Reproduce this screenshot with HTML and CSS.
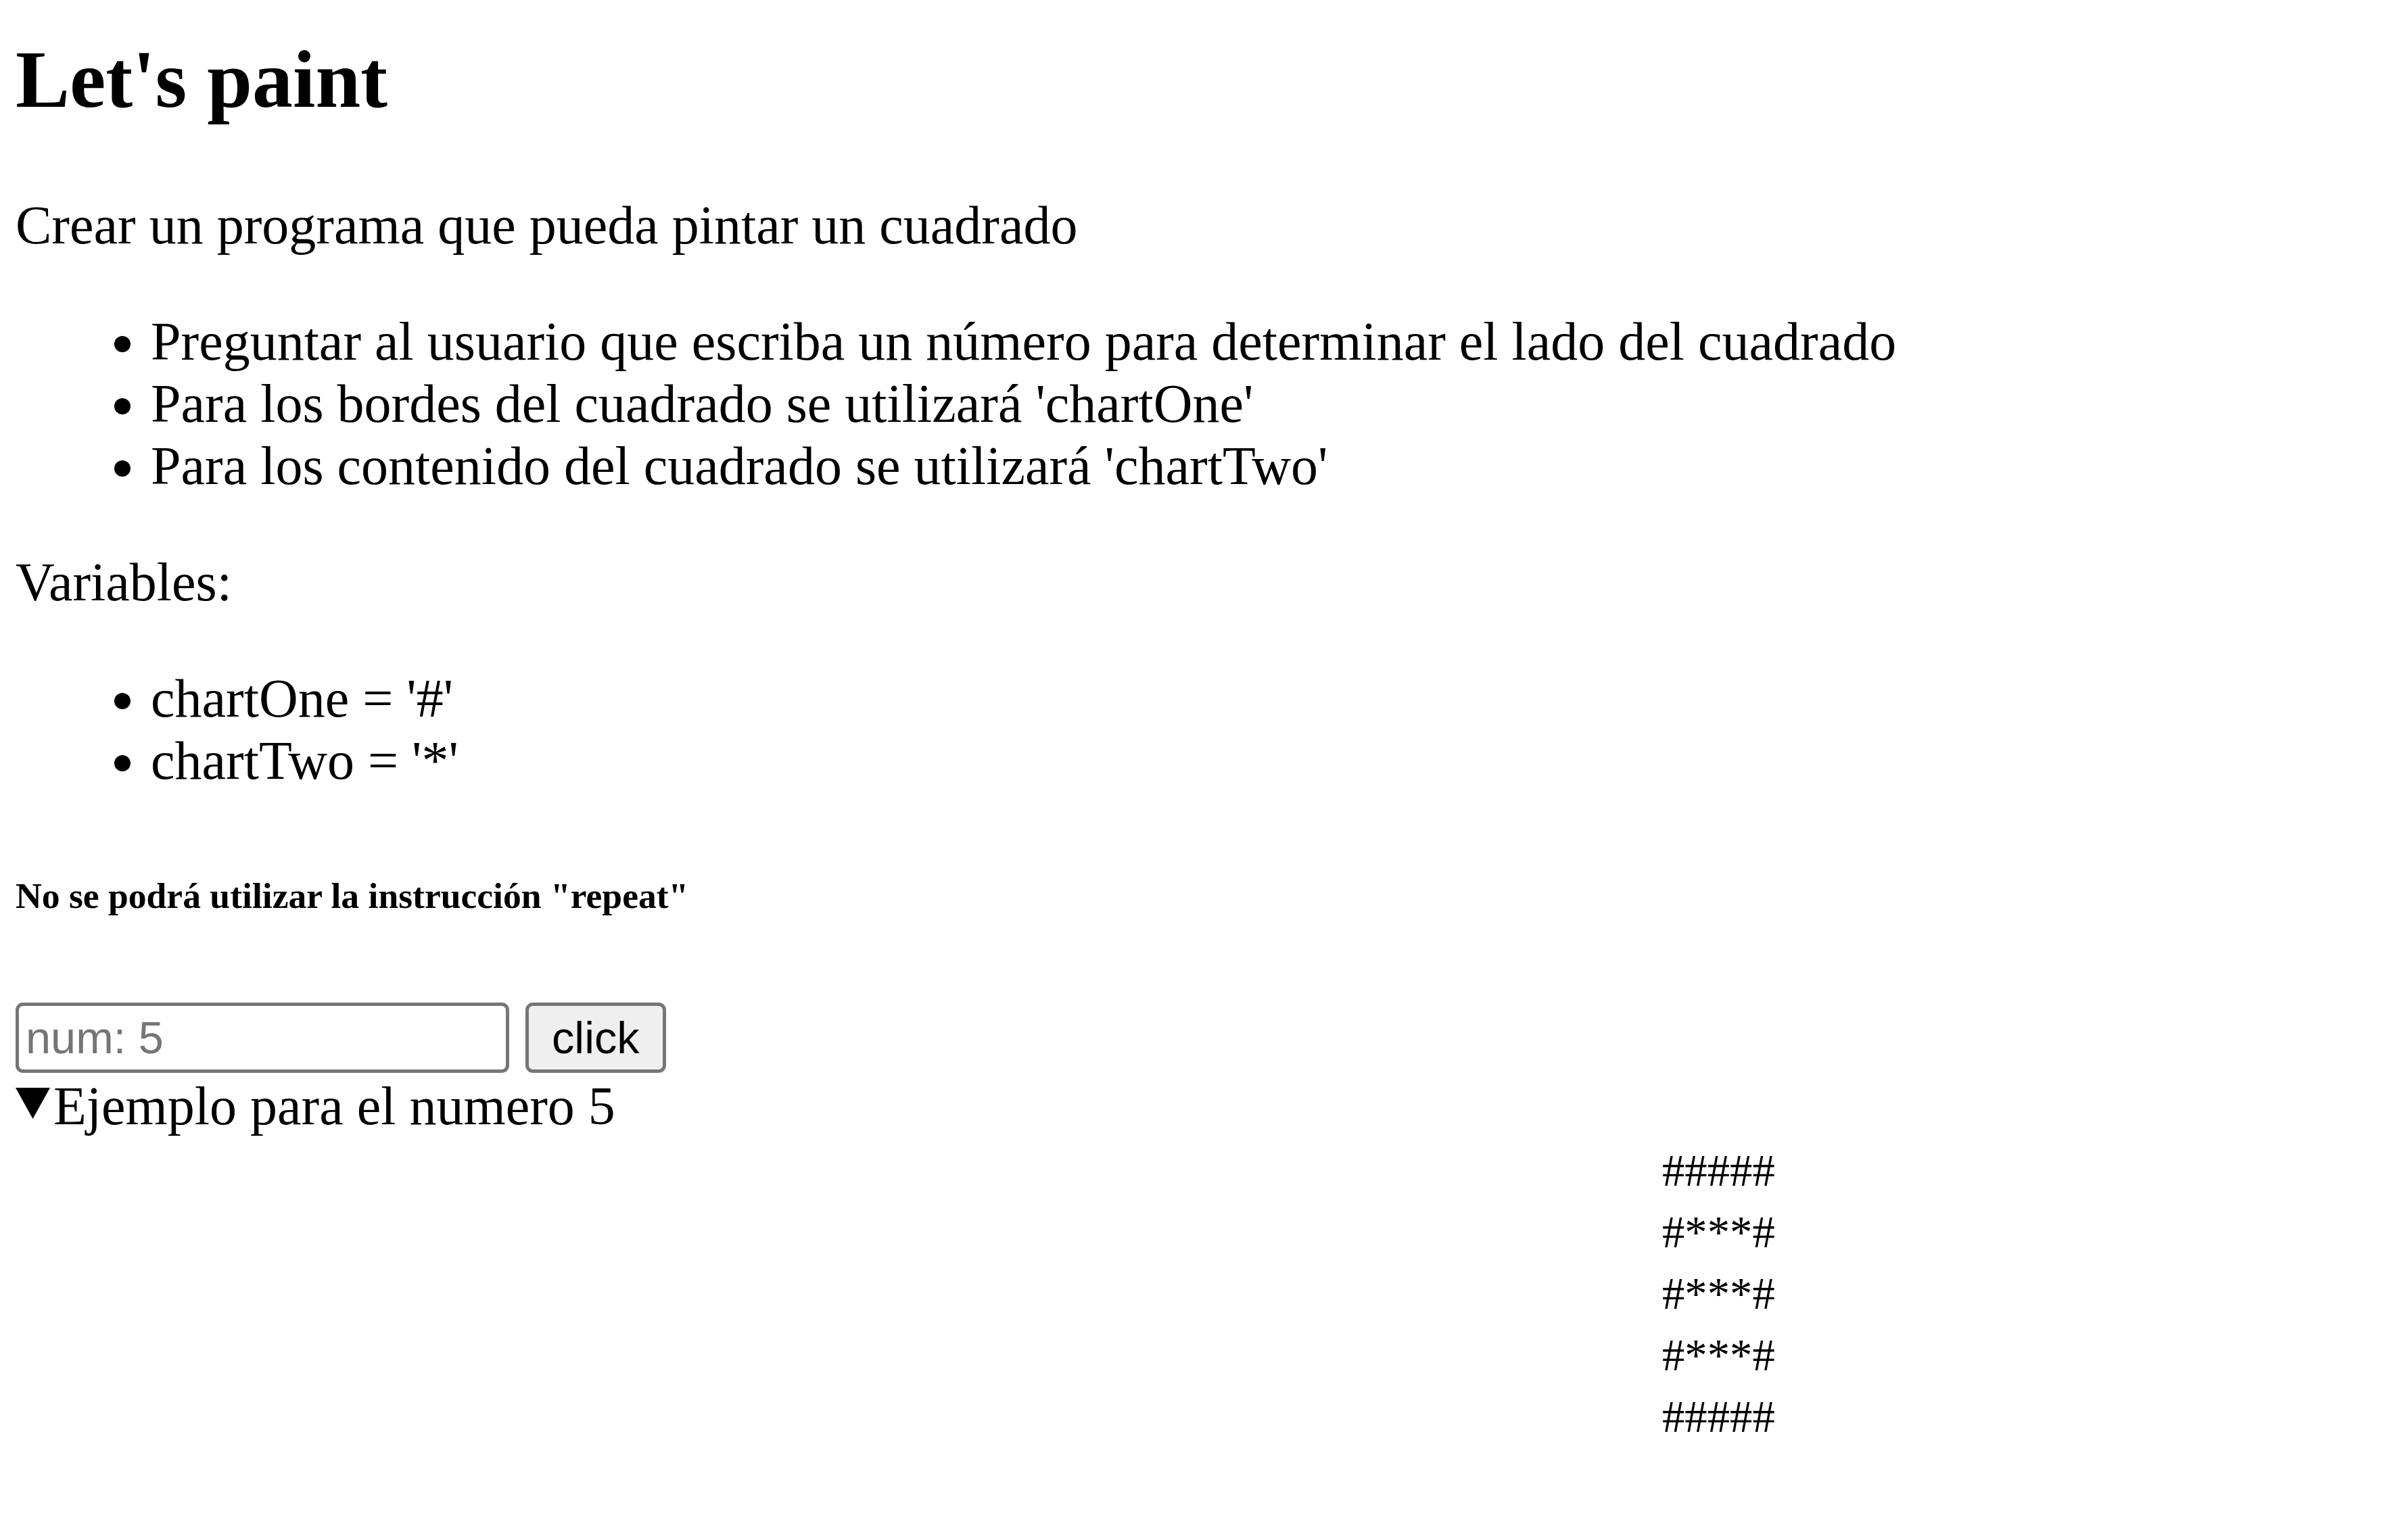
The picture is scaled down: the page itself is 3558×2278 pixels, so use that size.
FILE: index.html
```html
<!DOCTYPE html>
<html lang="es">
<head>
<meta charset="utf-8">
<title>Let's paint</title>
<link rel="stylesheet" href="styles.css">
</head>
<body>
<main class="page">
  <h1 class="title">Let's paint</h1>
  <p class="text">Crear un programa que pueda pintar un cuadrado</p>
  <ul class="list">
    <li>Preguntar al usuario que escriba un número para determinar el lado del cuadrado</li>
    <li>Para los bordes del cuadrado se utilizará 'chartOne'</li>
    <li>Para los contenido del cuadrado se utilizará 'chartTwo'</li>
  </ul>
  <p class="text">Variables:</p>
  <ul class="list">
    <li>chartOne = '#'</li>
    <li>chartTwo = '*'</li>
  </ul>
  <h6 class="note">No se podrá utilizar la instrucción "repeat"</h6>
  <div class="controls">
    <input class="num-input" type="text" placeholder="num: 5">
    <button class="btn" type="button">click</button>
  </div>
  <details class="example" open>
    <summary class="example-summary"><span class="marker"></span>Ejemplo para el numero 5</summary>
    <div class="square">
      <div class="row">#####</div>
      <div class="row">#***#</div>
      <div class="row">#***#</div>
      <div class="row">#***#</div>
      <div class="row">#####</div>
    </div>
  </details>
</main>
</body>
</html>
```
FILE: styles.css
```css
html, body {
  margin: 0;
  padding: 0;
  background: #ffffff;
}
body {
  font-family: "Liberation Serif", "Times New Roman", serif;
  font-size: 80px;
  line-height: 92px;
  color: #000;
}
.page {
  padding: 49px 23px 0 23px;
}
.title {
  font-size: 120px;
  line-height: 138px;
  font-weight: bold;
  margin: 0 0 100px 0;
}
.text {
  margin: 80px 0;
}
.list {
  margin: 80px 0;
  padding-left: 200px;
}
.note {
  font-size: 53.6px;
  line-height: 62px;
  font-weight: bold;
  margin: 123px 0;
}
.controls {
  display: flex;
  align-items: center;
  gap: 24px;
  margin: 127px 0 3px 0;
}
.num-input {
  box-sizing: border-box;
  width: 730px;
  height: 104px;
  margin: 0;
  border: 5px solid #767676;
  border-radius: 11px;
  padding: 5px 10px;
  font-family: "Liberation Sans", Arial, sans-serif;
  font-size: 66.7px;
  color: #000;
  background: #fff;
  outline: none;
}
.num-input::placeholder {
  color: #757575;
}
.btn {
  box-sizing: border-box;
  height: 104px;
  margin: 0;
  border: 5px solid #767676;
  border-radius: 11px;
  padding: 5px 34px;
  background: #efefef;
  font-family: "Liberation Sans", Arial, sans-serif;
  font-size: 66.7px;
  color: #000;
}
.example-summary {
  list-style: none;
  display: block;
}
.example-summary::-webkit-details-marker {
  display: none;
}
.marker {
  display: inline-block;
  width: 51px;
  height: 46px;
  margin-right: 5px;
  vertical-align: 8px;
  background: #000;
  clip-path: polygon(0 0, 100% 0, 50% 100%);
}
.square {
  margin-top: 4px;
  padding-left: 2435px;
  font-size: 66.7px;
  line-height: 91px;
}
```
